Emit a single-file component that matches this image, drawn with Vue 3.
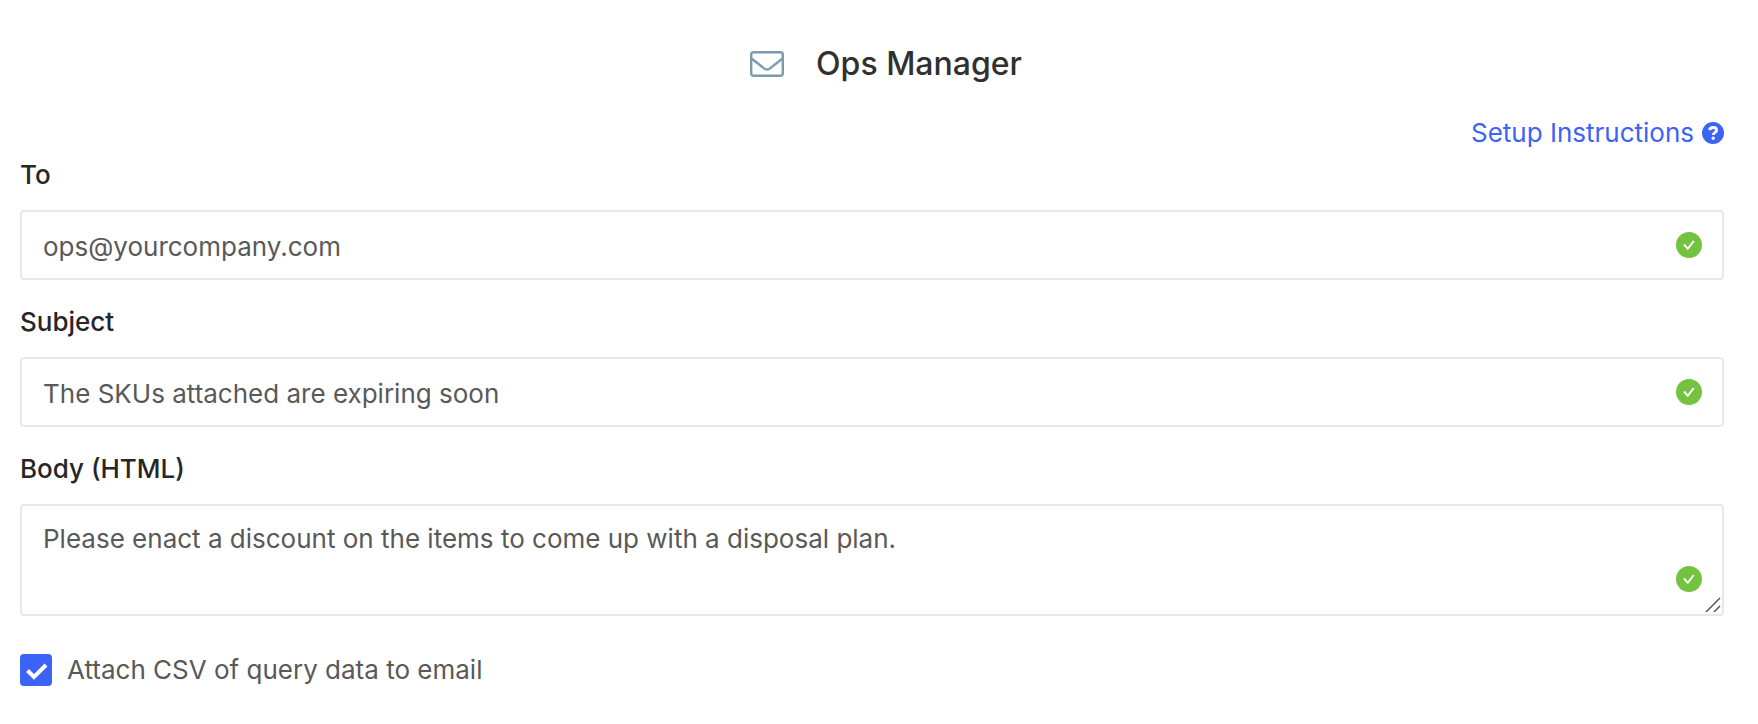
<script setup>
import { ref } from 'vue'

const to = ref('ops@yourcompany.com')
const subject = ref('The SKUs attached are expiring soon')
const body = ref('Please enact a discount on the items to come up with a disposal plan.')
const attachCsv = ref(true)
</script>

<template>
  <form class="panel" @submit.prevent>
    <header class="heading">
      <svg class="mail" viewBox="0 0 34 26" aria-hidden="true">
        <rect x="1.2" y="1.2" width="31.6" height="23.6" rx="2.5" />
        <path d="M1.5 7.5 14 17.4C16.2 19.1 17.8 19.1 20 17.4L32.5 7.5" />
      </svg>
      <h1 class="title">Ops Manager</h1>
    </header>

    <a class="setup" href="#setup">
      <span>Setup Instructions</span>
      <svg class="help" viewBox="0 0 22 22" aria-hidden="true">
        <circle cx="11" cy="11" r="11" />
        <path d="M7.3 8.1C8 6.3 9.2 5.5 11 5.5c2 0 3.6 1.1 3.6 2.8 0 2.5-3.3 2.3-3.3 4.6" />
        <rect x="9.7" y="14.8" width="3" height="3" rx="0.6" />
      </svg>
    </a>

    <div class="fields">
      <div class="field">
        <label class="label" for="to">To</label>
        <div class="control">
          <input id="to" v-model="to" class="box" type="text" />
          <svg class="valid" viewBox="0 0 26 26" aria-hidden="true">
            <circle cx="13" cy="13" r="13" />
            <path d="M8 12.5 11.8 16.8 17.8 9" />
          </svg>
        </div>
      </div>

      <div class="field">
        <label class="label" for="subject">Subject</label>
        <div class="control">
          <input id="subject" v-model="subject" class="box" type="text" />
          <svg class="valid" viewBox="0 0 26 26" aria-hidden="true">
            <circle cx="13" cy="13" r="13" />
            <path d="M8 12.5 11.8 16.8 17.8 9" />
          </svg>
        </div>
      </div>

      <div class="field">
        <label class="label" for="body">Body (HTML)</label>
        <div class="control">
          <textarea id="body" v-model="body" class="box area" rows="2"></textarea>
          <svg class="valid low" viewBox="0 0 26 26" aria-hidden="true">
            <circle cx="13" cy="13" r="13" />
            <path d="M8 12.5 11.8 16.8 17.8 9" />
          </svg>
          <svg class="grip" viewBox="0 0 16 16" aria-hidden="true">
            <path d="M1 15 15 1M9 15 15 9" />
          </svg>
        </div>
      </div>
    </div>

    <label class="attach">
      <span class="tick">
        <input v-model="attachCsv" class="tick-input" type="checkbox" />
        <svg v-if="attachCsv" class="tick-mark" viewBox="0 0 32 32" aria-hidden="true">
          <path d="M7.5 16.5 14 23 26 11" />
        </svg>
      </span>
      <span>Attach CSV of query data to email</span>
    </label>
  </form>
</template>

<style>
body {
  margin: 0;
  background: #fff;
}
</style>

<style scoped>
.panel {
  display: flex;
  flex-direction: column;
  padding: 44px 34px 38px 20px;
  font-family: Inter, "Liberation Sans", sans-serif;
  font-size: 26px;
  line-height: 32px;
  color: #595959;
}

.heading {
  display: flex;
  align-items: center;
  justify-content: center;
  gap: 32px;
  padding-left: 28px;
}

.mail {
  width: 34px;
  height: 26px;
  fill: none;
  stroke: #7c9aae;
  stroke-width: 2.4;
}

.title {
  margin: 0;
  font-size: 32px;
  font-weight: 500;
  line-height: 40px;
  color: #303030;
}

.setup {
  display: flex;
  align-items: center;
  align-self: flex-end;
  gap: 8px;
  margin-top: 33px;
  color: #3b63f7;
  text-decoration: none;
}

.help {
  width: 22px;
  height: 22px;
  fill: #3b63f7;
}

.help path {
  fill: none;
  stroke: #fff;
  stroke-width: 2.8;
}

.help rect {
  fill: #fff;
}

.fields {
  display: flex;
  flex-direction: column;
  gap: 26px;
  margin-top: 10px;
}

.field {
  display: flex;
  flex-direction: column;
  gap: 19px;
}

.label {
  font-weight: 500;
  color: #262626;
}

.control {
  position: relative;
  display: flex;
}

.box {
  box-sizing: border-box;
  width: 100%;
  height: 70px;
  margin: 0;
  padding: 2px 72px 0 21px;
  border: 2px solid #e8e8e8;
  border-radius: 4px;
  background: #fff;
  color: #595959;
  font: inherit;
  outline: none;
}

.box:focus-visible {
  border-color: #3b63f7;
}

.area {
  height: 112px;
  padding-top: 17px;
  padding-bottom: 16px;
  overflow: auto;
  resize: none;
}

.valid {
  position: absolute;
  right: 22px;
  top: 22px;
  width: 26px;
  height: 26px;
  fill: #73c240;
  pointer-events: none;
}

.valid path {
  fill: none;
  stroke: #fff;
  stroke-width: 2;
}

.low {
  top: auto;
  bottom: 24px;
}

.grip {
  position: absolute;
  right: 3px;
  bottom: 3px;
  width: 16px;
  height: 16px;
  fill: none;
  stroke: #555;
  stroke-width: 1.5;
  pointer-events: none;
}

.attach {
  display: flex;
  align-items: center;
  align-self: flex-start;
  gap: 15px;
  margin-top: 38px;
}

.tick {
  position: relative;
  display: flex;
}

.tick-input {
  width: 32px;
  height: 32px;
  margin: 0;
  border: 2px solid #d9d9d9;
  border-radius: 4px;
  background: #fff;
  appearance: none;
}

.tick-input:checked {
  border-color: #3b63f7;
  background: #3b63f7;
}

.tick-mark {
  position: absolute;
  inset: 0;
  width: 32px;
  height: 32px;
  fill: none;
  stroke: #fff;
  stroke-width: 4;
  pointer-events: none;
}
</style>
